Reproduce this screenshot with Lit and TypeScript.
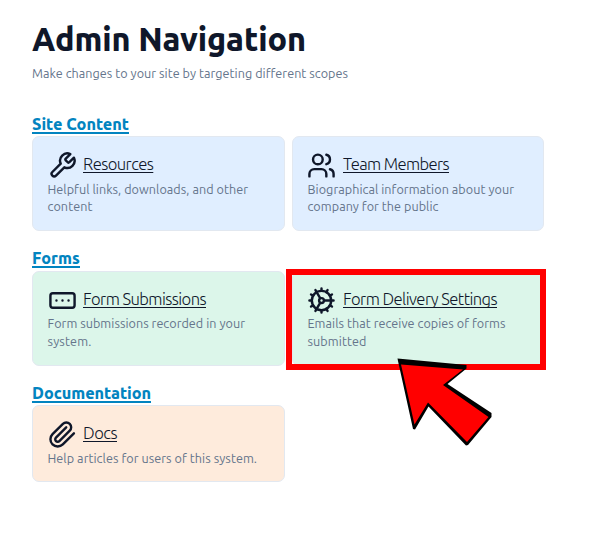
import { LitElement, html, svg, css } from "lit";
import { customElement, property } from "lit/decorators.js";

const icons: Record<string, unknown> = {
  wrench: svg`<path d="M14.7 6.3a1 1 0 0 0 0 1.4l1.6 1.6a1 1 0 0 0 1.4 0l3.77-3.77a6 6 0 0 1-7.94 7.94l-6.91 6.91a2.12 2.12 0 0 1-3-3l6.91-6.91a6 6 0 0 1 7.94-7.94l-3.76 3.76z"/>`,
  users: svg`<path d="M16 21v-2a4 4 0 0 0-4-4H6a4 4 0 0 0-4 4v2"/><circle cx="9" cy="7" r="4"/><path d="M22 21v-2a4 4 0 0 0-3-3.87M16 3.13a4 4 0 0 1 0 7.75"/>`,
  form: svg`<rect width="20" height="12" x="2" y="6" rx="2"/><path d="M12 12h.01M17 12h.01M7 12h.01"/>`,
  cog: svg`<path d="M12 20a8 8 0 1 0 0-16 8 8 0 0 0 0 16Z"/><path d="M12 14a2 2 0 1 0 0-4 2 2 0 0 0 0 4ZM12 2v2M12 22v-2M17 20.66l-1-1.73M11 10.27 7 3.34M20.66 17l-1.73-1M3.34 7l1.73 1M14 12h8M2 12h2M20.66 7l-1.73 1M3.34 17l1.73-1M17 3.34l-1 1.73M11 13.73l-4 6.93"/>`,
  clip: svg`<path d="m21.44 11.05-9.19 9.19a6 6 0 0 1-8.49-8.49l8.57-8.57A4 4 0 1 1 18 8.84l-8.59 8.57a2 2 0 0 1-2.83-2.83l8.49-8.48"/>`,
};

type Line = [text: string, width: number];
interface Card { icon: string; title: Line; lines: Line[]; marked?: boolean }
interface Section { title: Line; tone: string; cards: Card[] }

const sections: Section[] = [
  {
    title: ["Site Content", 97], tone: "blue",
    cards: [
      { icon: "wrench", title: ["Resources", 70.3], lines: [["Helpful links, downloads, and other", 200.5], ["content", 45]] },
      { icon: "users", title: ["Team Members", 106], lines: [["Biographical information about your", 206.5], ["company for the public", 131]] },
    ],
  },
  {
    title: ["Forms", 48], tone: "green",
    cards: [
      { icon: "form", title: ["Form Submissions", 123], lines: [["Form submissions recorded in your", 197.5], ["system.", 44]] },
      { icon: "cog", title: ["Form Delivery Settings", 154], lines: [["Emails that receive copies of forms", 198], ["submitted", 59]], marked: true },
    ],
  },
  {
    title: ["Documentation", 119], tone: "peach",
    cards: [
      { icon: "clip", title: ["Docs", 34], lines: [["Help articles for users of this system.", 209.5]] },
    ],
  },
];

/** One line of text, tracked so that it spans the given width. */
@customElement("fit-line")
class FitLine extends LitElement {
  @property() text = "";
  @property({ type: Number }) width = 0;
  static styles = css`
    :host { display: inline-block; vertical-align: top; white-space: nowrap; }
  `;
  render() { return html`${this.text}`; }
  firstUpdated() {
    const natural = this.getBoundingClientRect().width;
    this.style.letterSpacing = `${(this.width - natural) / this.text.length}px`;
  }
}

const line = ([text, width]: Line, cls: string) =>
  html`<fit-line class=${cls} .text=${text} .width=${width}></fit-line>`;

@customElement("app-root")
class AppRoot extends LitElement {
  static styles = css`
    :host {
      display: block; position: relative; box-sizing: border-box;
      height: 550px; padding: 19px 52px 0 32px; overflow: hidden;
      background: #fff; color: #0f172a;
      font-family: Ubuntu, "Noto Sans", sans-serif;
    }
    h1, h2, h3, p { margin: 0; font-size: inherit; font-weight: inherit; }
    h1 { height: 40px; }
    .page-title { font-size: 32.4px; font-weight: 800; line-height: 40px; }
    .sub { font-size: 12.6px; font-weight: 430; line-height: 18px; color: #64748b; }
    .intro { height: 18px; margin-top: 5px; }
    .sections { padding-top: 32px; }
    .section { display: flow-root; height: 134.5px; }
    .section h2 { height: 22.8px; margin-top: -0.5px; }
    .section-title {
      font-size: 16.2px; font-weight: 800; line-height: 20px; color: #0284c0;
      text-decoration: underline; text-decoration-thickness: 2px;
      text-underline-offset: 2px; text-decoration-skip-ink: none;
    }
    .cards { display: grid; grid-template-columns: 253px 252px; gap: 7px; }
    .card {
      position: relative; box-sizing: border-box; height: 95px;
      padding: 12.5px 14.5px; border: 1px solid #e2e8f0; border-radius: 7px;
    }
    .blue { background: #e0eeff; }
    .green { background: #dcf6ea; }
    .peach { background: #feebdc; height: 77px; }
    .head { display: flex; gap: 6px; height: 31px; padding-left: 0.5px; align-items: center; }
    .card:nth-child(2) .head { padding-left: 0; margin-left: -0.5px; gap: 7px; }
    .icon { width: 29px; height: 29px; flex: none; fill: none; stroke: currentColor; stroke-width: 2; stroke-linecap: round; stroke-linejoin: round; }
    .green .icon { margin-top: 1px; }
    .card-title {
      font-size: 16.6px; font-weight: 310; line-height: 24px; margin-top: -2px;
      text-decoration: underline; text-decoration-thickness: 1px;
      text-underline-offset: 2px; text-decoration-skip-ink: none;
    }
    .desc { display: flex; flex-direction: column; align-items: flex-start; }
    .line { font-size: 12.6px; font-weight: 430; line-height: 17.6px; color: #64748b; }
    .mark { position: absolute; left: -7px; top: -3px; width: 260px; height: 101px; box-sizing: border-box; border: 6px solid #f00; }
    .arrow { position: absolute; left: 396px; top: 356px; width: 98px; height: 92px; }
  `;

  private card(c: Card, tone: string) {
    return html`<div class="card ${tone}">
      <div class="head">
        <svg class="icon" viewBox="0 0 24 24">${icons[c.icon]}</svg>
        <h3>${line(c.title, "card-title")}</h3>
      </div>
      <div class="desc">${c.lines.map((l) => line(l, "line"))}</div>
      ${c.marked ? html`<div class="mark"></div>` : ""}
    </div>`;
  }

  render() {
    return html`
      <h1>${line(["Admin Navigation", 274], "page-title")}</h1>
      <p class="intro">${line(["Make changes to your site by targeting different scopes", 316], "sub")}</p>
      <div class="sections">
        ${sections.map((s) => html`<section class="section">
          <h2>${line(s.title, "section-title")}</h2>
          <div class="cards">${s.cards.map((c) => this.card(c, s.tone))}</div>
        </section>`)}
      </div>
      <svg class="arrow" viewBox="396 356 98 92">
        <polygon points="397.5,358.5 466.5,365 466.5,368.5 447.5,384 491.5,413 491.5,417 468,445 466,445.5 428.5,406.5 415,429.5 413,429 398,361"/>
        <polygon fill="#f00" points="401,364.5 463,369.5 443,385 488.5,417 467,442 428,402.5 414.5,424.5"/>
      </svg>`;
  }
}
